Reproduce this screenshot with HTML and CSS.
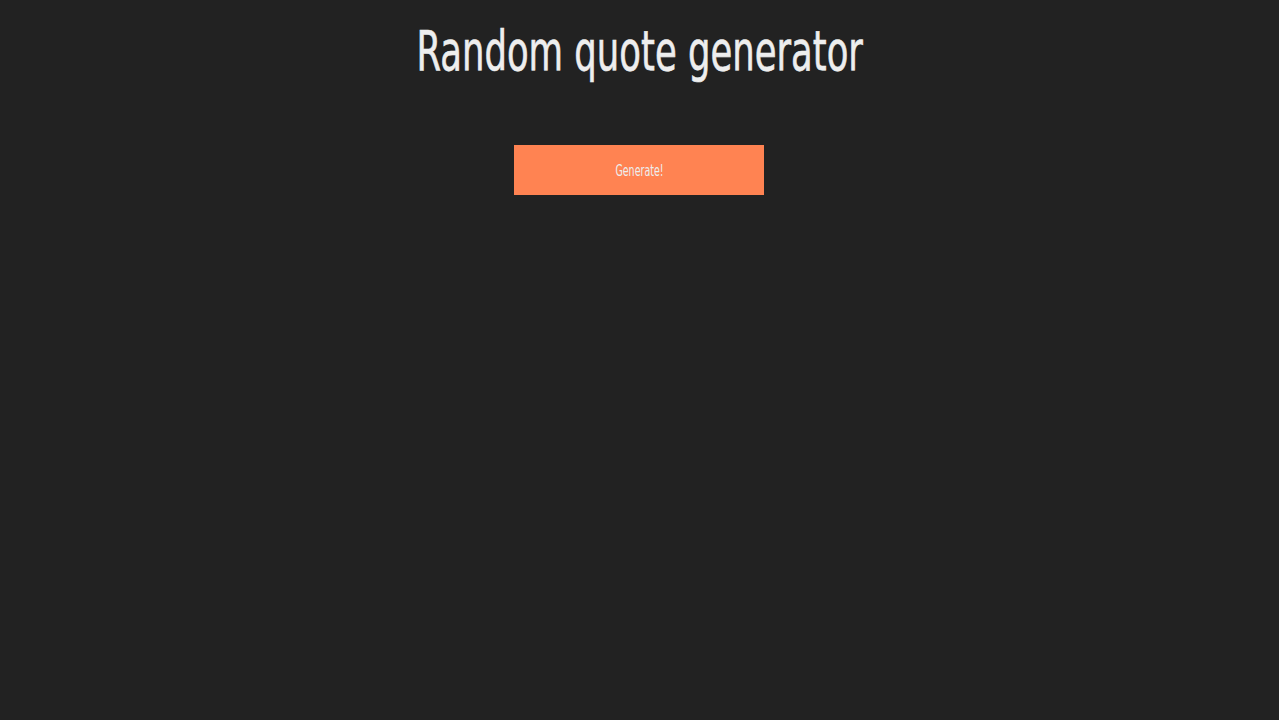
FILE: index.html
```html
<!DOCTYPE html>
<html lang="en">
<head>
    <meta charset="UTF-8">
    <meta name="viewport" content="width=device-width, initial-scale=1.0">
    <title>Random quote generator</title>
    <link rel="stylesheet" href="styles.css">
</head>
<body>
    <h1 class="title"><span class="narrow">Random quote generator</span></h1>
    <div class="quote-box">
        <p id="quote" class="quote"></p>
        <button type="button" class="generate" onclick="newQuote()"><span class="narrow">Generate!</span></button>
    </div>

    <script>
        const quotes = [
            "The only way to do great work is to love what you do.",
            "Simplicity is the soul of efficiency.",
            "Stay hungry, stay foolish."
        ];

        function newQuote() {
            // Pick a random quote and show it above the button
            const i = Math.floor(Math.random() * quotes.length);
            document.getElementById('quote').textContent = quotes[i];
        }
    </script>
</body>
</html>
```

FILE: styles.css
```css
body {
    font-family: "DejaVu Sans Condensed", "Liberation Sans", sans-serif;
    background-color: #222222;
    color: #eeeeee;
    margin: 0;
    padding: 0;
    text-align: center;
}
/* condensed headline look, squeezed horizontally */
.narrow {
    display: inline-block;
    transform: scaleX(0.716);
}
.title {
    font-size: 55px;
    font-weight: normal;
    margin: 17px 0 0;
    line-height: 68px;
    -webkit-text-stroke: 0.6px #eeeeee;
}
.quote-box {
    display: flex;
    flex-direction: column;
    align-items: center;
    margin-top: 60px;
}
.quote {
    margin: 0;
    font-size: 20px;
}
.quote:empty {
    display: none;
}
.generate {
    background-color: #ff8352;
    color: #eeeeee;
    width: 250px;
    height: 50px;
    margin-right: 1px;
    border: none;
    font-family: inherit;
    font-size: 16px;
    cursor: pointer;
}
.generate .narrow {
    transform: scaleX(0.66);
}
```
